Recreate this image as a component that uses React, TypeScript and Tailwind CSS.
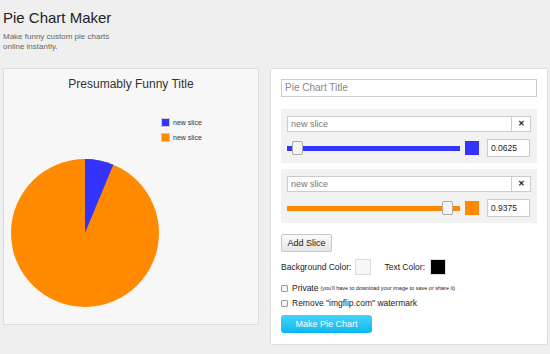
import React from "react";

type Slice = { label: string; color: string; value: string; pos: number };

const slices: Slice[] = [
  { label: "new slice", color: "#3333ff", value: "0.0625", pos: 5 },
  { label: "new slice", color: "#ff8800", value: "0.9375", pos: 155 },
];

function Pie() {
  // blue slice 0.0625 of the circle, clockwise from top
  const r = 74;
  const cx = 75;
  const cy = 75;
  const a = 0.0625 * Math.PI * 2;
  const x = cx + r * Math.sin(a);
  const y = cy - r * Math.cos(a);
  return (
    <svg width="150" height="150" viewBox="0 0 150 150">
      <circle cx={cx} cy={cy} r={r} fill="#ff8a00" />
      <path d={`M${cx} ${cy} L${cx} ${cy - r} A${r} ${r} 0 0 1 ${x} ${y} Z`} fill="#3333ff" />
    </svg>
  );
}

function SliceRow({ s }: { s: Slice }) {
  return (
    <div className="bg-[#f2f2f2] h-[54px] px-[6px] pt-[7px]">
      <div className="flex h-[16px] bg-white border border-[#ccc]">
        <div className="flex-1 pl-[3px] text-[9px] leading-[14px] text-[#777]">{s.label}</div>
        <div className="w-[19px] border-l border-[#ccc] flex items-center justify-center text-[8px] font-bold text-[#222]">
          ✕
        </div>
      </div>
      <div className="flex items-center mt-[7px] h-[18px]">
        <div className="relative w-[173px] h-[5px]" style={{ background: s.color }}>
          <div
            className="absolute top-[-5px] w-[11px] h-[14px] bg-[#f4f4f4] border border-[#aaa] rounded-[2px]"
            style={{ left: s.pos }}
          />
        </div>
        <div className="w-[14px] h-[14px] ml-[5px]" style={{ background: s.color }} />
        <div className="ml-[8px] w-[43px] h-[18px] border border-[#ccc] bg-white text-[8.5px] leading-[16px] pl-[3px] text-[#222]">
          {s.value}
        </div>
      </div>
    </div>
  );
}

export default function App() {
  return (
    <div className="w-[550px] h-[354px] bg-[#efefef] overflow-hidden font-['Liberation_Sans',Arial,sans-serif]">
      {/* Header */}
      <div className="pl-[3px] pt-[8px]">
        <h1 className="text-[15px] leading-[20px] text-[#222]">Pie Chart Maker</h1>
        <p className="mt-[4px] w-[115px] text-[8px] leading-[10px] text-[#666]">
          Make funny custom pie charts online instantly.
        </p>
      </div>

      <div className="flex gap-[11px] pl-[3px] mt-[16px]">
        {/* Chart preview */}
        <div className="w-[256px] h-[257px] bg-[#f7f7f7] border border-[#ddd]">
          <div className="text-center text-[12px] leading-[16px] text-[#333] pt-[7px]">Presumably Funny Title</div>
          <div className="ml-[157px] mt-[26px] flex flex-col gap-[6px]">
            {slices.map((s, i) => (
              <div key={i} className="flex items-center gap-[3px] h-[9px]">
                <div className="w-[9px] h-[9px] border border-[#ccc]" style={{ background: s.color }} />
                <span className="text-[7px] leading-[9px] text-[#333]">{s.label}</span>
              </div>
            ))}
          </div>
          <div className="ml-[6px] mt-[16px]">
            <Pie />
          </div>
        </div>

        {/* Controls */}
        <div className="w-[278px] h-[277px] bg-white border border-[#ddd] rounded-[2px] px-[10px] pt-[10px]">
          <div className="h-[18px] border border-[#ccc] text-[10px] leading-[16px] pl-[3px] text-[#888]">
            Pie Chart Title
          </div>

          <div className="mt-[12px] flex flex-col gap-[6px]">
            {slices.map((s, i) => (
              <SliceRow key={i} s={s} />
            ))}
          </div>

          <button className="block mt-[11px] h-[18px] w-[51px] border border-[#c8c8c8] rounded-[2px] bg-gradient-to-b from-[#fafafa] to-[#e6e6e6] text-[9px] leading-[16px] text-[#222]">
            Add Slice
          </button>

          <div className="flex items-center mt-[7px] h-[16px] text-[8.5px] text-[#222]">
            <span>Background Color:</span>
            <div className="ml-[4px] w-[16px] h-[16px] bg-[#f7f7f7] border border-[#ddd]" />
            <span className="ml-[13px]">Text Color:</span>
            <div className="ml-[5px] w-[16px] h-[16px] bg-black border border-[#ddd]" />
          </div>

          <div className="flex items-center mt-[9px] h-[9px] text-[8.5px] text-[#222]">
            <div className="w-[7px] h-[7px] border border-[#999] rounded-[1px] bg-[#f4f4f4]" />
            <span className="ml-[4px]">Private</span>
            <span className="ml-[2px] text-[5.5px]">(you'll have to download your image to save or share it)</span>
          </div>
          <div className="flex items-center mt-[6px] h-[9px] text-[8.5px] text-[#222]">
            <div className="w-[7px] h-[7px] border border-[#999] rounded-[1px] bg-[#f4f4f4]" />
            <span className="ml-[4px]">Remove "imgflip.com" watermark</span>
          </div>

          <button className="block mt-[7px] h-[18px] w-[91px] rounded-[3px] bg-gradient-to-b from-[#43d3fb] to-[#00b8f0] text-white text-[9px] leading-[18px]">
            Make Pie Chart
          </button>
        </div>
      </div>
    </div>
  );
}
